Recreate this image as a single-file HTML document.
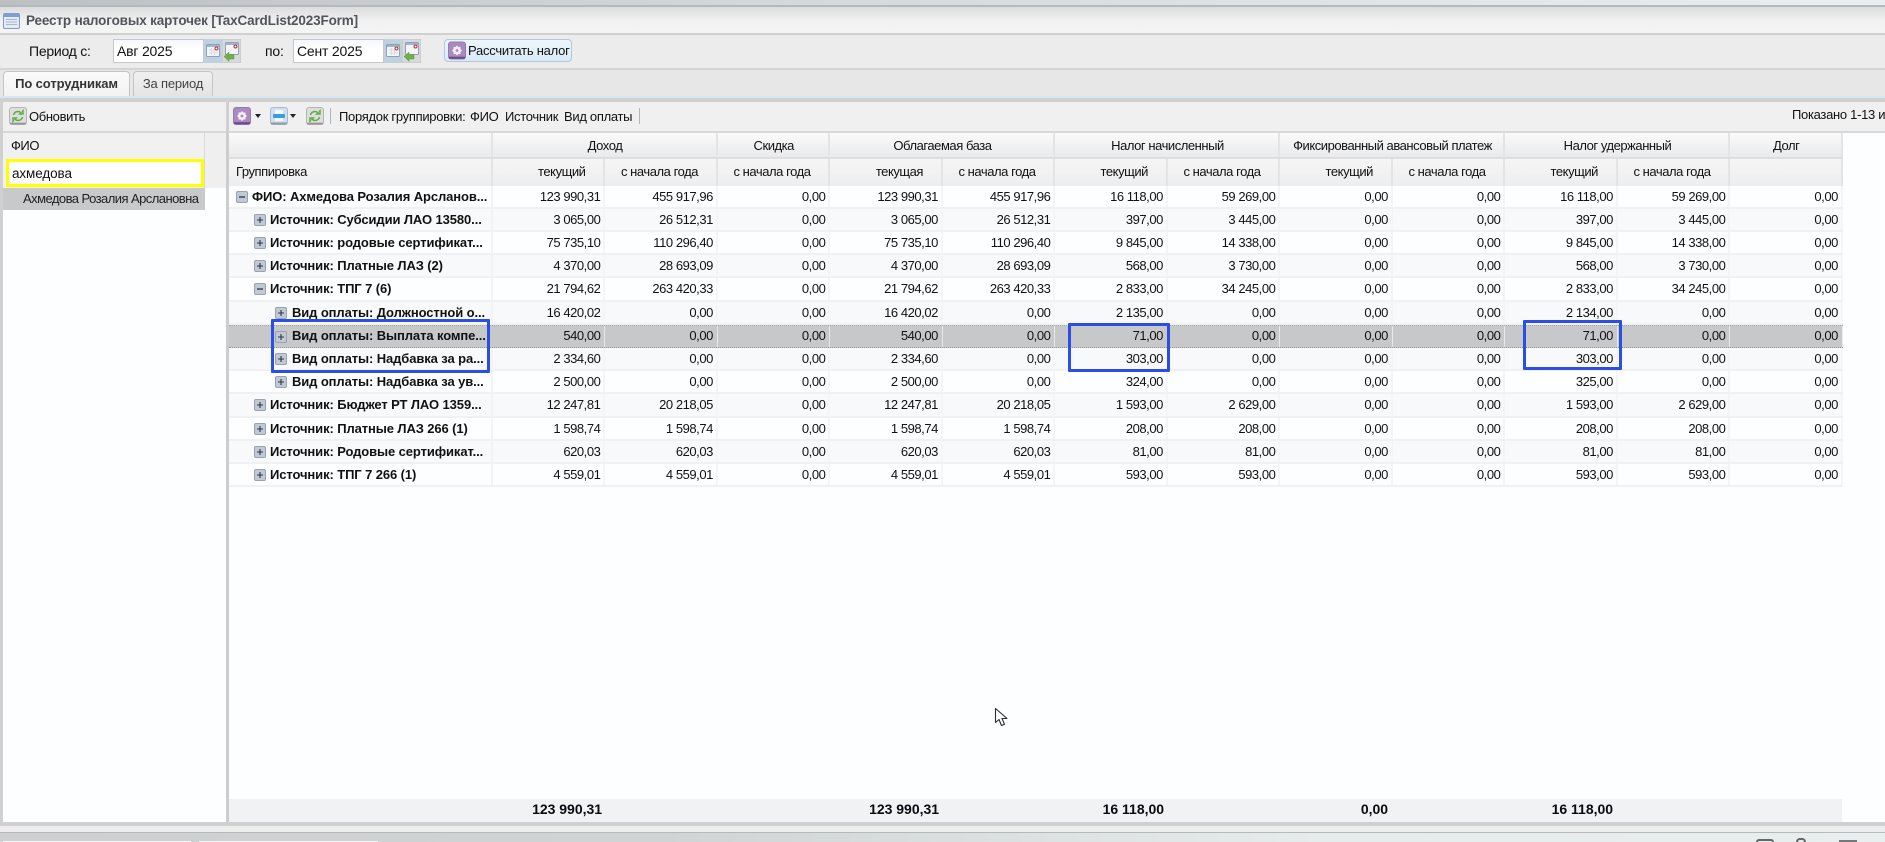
<!DOCTYPE html>
<html lang="ru"><head><meta charset="utf-8"><title>Реестр налоговых карточек</title>
<style>
*{box-sizing:border-box}
html,body{margin:0;padding:0;width:1885px;height:842px;overflow:hidden;background:#d0d0d0}
body{position:relative;font:13px/1 "Liberation Sans","Noto Sans CJK SC",sans-serif;color:#111;letter-spacing:-.45px}
.a{position:absolute;white-space:nowrap}
svg{position:absolute;display:block}
.rows{position:absolute;left:229px;top:185.5px;width:1613.500px}
.r{display:flex;height:23.23px;line-height:21px;background:#fdfeff;border-bottom:2px solid #f0f1f2}
.r.e{background:#f8f9fa}
.r.s{background:#c7c8ca;border-bottom:1px dotted #999;border-top:1px dotted #aaa;line-height:20px}
.r .n{width:263.500px;flex:none;position:relative;font-weight:bold;white-space:nowrap;overflow:hidden;border-right:2px solid #f2f3f5;letter-spacing:-.1px}
.r.s .n,.r.s span{border-right-color:#c7c8ca}
.r span{width:112.5px;flex:none;text-align:right;padding-right:2.6px;border-right:2px solid #f4f5f7}
.r.s span{border-right:1px solid #e8e8ea;padding-right:3.6px}
.l0{padding-left:23px}.l1{padding-left:41px}.l2{padding-left:63px}
.n svg{top:5px}
.l0 svg{left:7px}.l1 svg{left:25px}.l2 svg{left:46px}
.hd{position:absolute;display:flex;left:229px;width:1613.500px}
.hd div{flex:none;border-right:2px solid #e4e4e5}
.h1{top:133px;height:26px;line-height:25px;text-align:center;background:linear-gradient(#fafafa,#f4f4f4 40%,#e9eaec);border-bottom:2px solid #dedede}
.h1 div{padding-left:2px}
.h2{top:159px;height:26.5px;line-height:25px;text-align:right;background:linear-gradient(#f5f5f5,#eeeef0)}
.h2 div{width:112.5px;padding-right:17.5px}
.box{position:absolute;border:3px solid #2b4fe3;border-radius:1px}
.f{position:absolute;top:799px;font-weight:bold;font-size:14px;line-height:20px;letter-spacing:-.02px;color:#0a0a12;white-space:nowrap;text-align:right}
</style></head><body>
<svg width="0" height="0" style="position:absolute"><defs>
<symbol id="plus" viewBox="0 0 12 12"><rect x=".5" y=".5" width="11" height="11" rx="1.5" fill="#c0c9d5" stroke="#98a2b1"/><path d="M3 6h6M6 3v6" stroke="#2d3644" stroke-width="1.1"/></symbol>
<symbol id="minus" viewBox="0 0 12 12"><rect x=".5" y=".5" width="11" height="11" rx="1.5" fill="#c0c9d5" stroke="#98a2b1"/><path d="M3 6h6" stroke="#2d3644" stroke-width="1.3"/></symbol>
<symbol id="cal" viewBox="0 0 18 24"><rect width="18" height="24" fill="#bfd0de"/><rect x="2.500" y="5.500" width="13" height="12" rx="1" fill="#f4f5f6" stroke="#8ba2bb"/><rect x="3" y="6" width="12" height="2" fill="#9fb6d2"/><circle cx="12.500" cy="9.500" r="1.500" fill="#fff" stroke="#c02a2a"/><path d="M5 11h5M5 14h9M7.500 9v7M10.500 11v5" stroke="#d8dce0"/></symbol>
<symbol id="calb" viewBox="0 0 19 24"><rect width="19" height="24" fill="#d8d9da" stroke="#c0c4c8"/><rect x="3.500" y="3.500" width="13" height="12" rx="1" fill="#f4f5f6" stroke="#8ba2bb"/><rect x="4" y="4" width="12" height="2" fill="#9fb6d2"/><circle cx="13.500" cy="7.500" r="1.500" fill="#fff" stroke="#c02a2a"/><path d="M2 17.500l5-4.500v2.500h5v4.500H7v2.500z" fill="#6fb04a" stroke="#5c9a3a" stroke-width=".5"/></symbol>
<symbol id="pur" viewBox="0 0 18 18"><rect x=".5" y=".5" width="17" height="17" rx="2.500" fill="#a98bc0" stroke="#957bad"/><rect x="1" y="15.200" width="16" height="2" fill="#6d4a88"/><path d="M9 4l1.500 1.500H12.500V7.500L14 9l-1.500 1.500v2h-2L9 14l-1.500-1.500h-2v-2L4 9l1.500-1.500v-2h2z" fill="#f3edf7"/><circle cx="9" cy="9" r="1.400" fill="#a98bc0"/></symbol>
<symbol id="blu" viewBox="0 0 18 18"><rect x=".5" y=".5" width="17" height="17" rx="2.500" fill="#cfe0ee" stroke="#a6bacb"/><rect x="1" y="15.500" width="16" height="2" fill="#8f9ba6"/><rect x="5" y="3" width="8" height="4" fill="#f5f8fa"/><rect x="3" y="7" width="12" height="4" rx="1" fill="#3a9de0"/><rect x="5" y="11" width="8" height="3" fill="#f5f8fa"/></symbol>
<symbol id="ref" viewBox="0 0 18 18"><rect x=".5" y=".5" width="17" height="17" rx="2.500" fill="#dedede" stroke="#b4b4b4"/><rect x="1" y="15.700" width="16" height="1.800" fill="#979797"/><path d="M4.500 8a4.500 4.500 0 0 1 7.500-2.200L10.800 7h3.200V3.800L13 4.800M13.500 10A4.500 4.500 0 0 1 6 12.200L7.200 11H4v3.200l1-1" fill="none" stroke="#5cb040" stroke-width="1.500"/></symbol>
</defs></svg>

<!-- top -->
<div class="a" style="left:0;top:0;width:1885px;height:5px;background:linear-gradient(90deg,#bcc0c0,#d4d8d8 40%,#e9efef)"></div>
<div class="a" style="left:0;top:5px;width:1885px;height:2px;background:#b4b8c0"></div>
<div class="a" style="left:0;top:7px;width:1885px;height:26px;background:linear-gradient(#dcdcdc,#f2f2f2 55%,#f4f4f4)"></div>
<svg style="left:3px;top:13px" width="17" height="16" viewBox="0 0 17 16"><rect x=".5" y=".5" width="16" height="15" rx="1.500" fill="#e4ebf5" stroke="#7f9ccc"/><rect x="1" y="1" width="15" height="3" fill="#7d9fd6"/><path d="M3 6.500h11M3 9h11M3 11.500h11" stroke="#a9b7cc"/></svg>
<div class="a" style="left:26px;top:13px;font-size:13.5px;font-weight:bold;color:#50555b;line-height:15px;letter-spacing:-.15px">Реестр налоговых карточек [TaxCardList2023Form]</div>
<div class="a" style="left:0;top:33px;width:1885px;height:2px;background:#d0d0d0"></div>

<!-- filter bar -->
<div class="a" style="left:0;top:35px;width:1885px;height:33px;background:#ececec"></div>
<div class="a" style="left:29px;top:44px;font-size:14px;line-height:15px;letter-spacing:-.25px">Период с:</div>
<div class="a" style="left:113px;top:39px;width:91px;height:24px;background:linear-gradient(#f4f7fb,#fff 40%);border:1px solid #c4c8cc;font-size:14px;line-height:22px;padding-left:3px;letter-spacing:-.2px">Авг 2025</div>
<svg style="left:204px;top:39px" width="18" height="24"><use href="#cal"/></svg>
<svg style="left:222px;top:39px" width="19" height="24"><use href="#calb"/></svg>
<div class="a" style="left:265px;top:44px;font-size:14px;line-height:15px;letter-spacing:-.2px">по:</div>
<div class="a" style="left:293px;top:39px;width:91px;height:24px;background:linear-gradient(#f4f7fb,#fff 40%);border:1px solid #c4c8cc;font-size:14px;line-height:22px;padding-left:3px;letter-spacing:-.2px">Сент 2025</div>
<svg style="left:384px;top:39px" width="18" height="24"><use href="#cal"/></svg>
<svg style="left:402px;top:39px" width="19" height="24"><use href="#calb"/></svg>
<div class="a" style="left:444px;top:39px;width:128px;height:23px;border:1px solid #b4c6d8;border-radius:4px;background:linear-gradient(#eef6fc,#d8eaf7);font-size:13px;line-height:22px;padding-left:23px;letter-spacing:-.25px;color:#111">Рассчитать налог</div>
<svg style="left:448px;top:41px" width="18" height="19"><use href="#pur"/></svg>
<div class="a" style="left:0;top:68px;width:1885px;height:2px;background:#d4d4d4"></div>

<!-- tabs -->
<div class="a" style="left:0;top:70px;width:1885px;height:26px;background:#e7e7e7"></div>
<div class="a" style="left:3px;top:71px;width:127px;height:26px;background:linear-gradient(#fafafa,#f2f2f2);border:1px solid #c4c4c4;border-bottom:0;border-radius:4px 4px 0 0;font-weight:bold;color:#333;line-height:24px;text-align:center;letter-spacing:-.1px">По сотрудникам</div>
<div class="a" style="left:133px;top:71px;width:80px;height:25px;background:linear-gradient(#f0f0f0,#e4e4e4);border:1px solid #c4c4c4;border-bottom:0;border-radius:4px 4px 0 0;color:#444;line-height:24px;text-align:center;letter-spacing:-.2px">За период</div>
<div class="a" style="left:0;top:96px;width:1885px;height:2px;background:#d8e8f2"></div>
<div class="a" style="left:0;top:98px;width:1885px;height:4px;background:#d0d0d0"></div>

<!-- left panel -->
<div class="a" style="left:3px;top:102px;width:223px;height:29px;background:#f0f0f0"></div>
<svg style="left:9px;top:107px" width="18" height="18"><use href="#ref"/></svg>
<div class="a" style="left:29px;top:109px;line-height:15px;letter-spacing:-.35px">Обновить</div>
<div class="a" style="left:3px;top:131px;width:223px;height:691px;background:#fdfeff"></div>
<div class="a" style="left:3px;top:131px;width:223px;height:2px;background:#d8d8d8"></div>
<div class="a" style="left:3px;top:133px;width:202px;height:56px;background:#f1f1f1;border-right:1px solid #d8d8d8"></div>
<div class="a" style="left:205px;top:133px;width:21px;height:55px;background:#efefef"></div>
<div class="a" style="left:11px;top:138px;line-height:15px">ФИО</div>
<div class="a" style="left:6px;top:159px;width:198px;height:28px;background:#fff;border:3px solid #ffff00;font-size:13.5px;line-height:24px;padding-left:3px;letter-spacing:-.1px">ахмедова</div>
<div class="a" style="left:3px;top:188px;width:202px;height:22px;background:#c8c9cb;line-height:21px;padding-left:20px;color:#222;letter-spacing:-.55px">Ахмедова Розалия Арслановна</div>

<!-- right -->
<div class="a" style="left:229px;top:102px;width:1656px;height:29px;background:#f0f0f0"></div>
<svg style="left:233px;top:107px" width="18" height="18"><use href="#pur"/></svg>
<svg style="left:255px;top:114px" width="6" height="4"><path d="M0 0h6L3 4z" fill="#222"/></svg>
<svg style="left:270px;top:107px" width="18" height="18"><use href="#blu"/></svg>
<svg style="left:290px;top:114px" width="6" height="4"><path d="M0 0h6L3 4z" fill="#222"/></svg>
<svg style="left:306px;top:107px" width="18" height="18"><use href="#ref"/></svg>
<div class="a" style="left:330px;top:108px;width:1px;height:16px;background:#b0b8b8"></div>
<div class="a" style="left:339px;top:109px;line-height:15px;letter-spacing:-.3px">Порядок группировки:</div>
<div class="a" style="left:470px;top:109px;line-height:15px;letter-spacing:-.3px">ФИО</div>
<div class="a" style="left:505px;top:109px;line-height:15px;letter-spacing:-.3px">Источник</div>
<div class="a" style="left:564px;top:109px;line-height:15px;letter-spacing:-.3px">Вид оплаты</div>
<div class="a" style="left:639px;top:108px;width:1px;height:16px;background:#b0b8b8"></div>
<div class="a" style="left:1792px;top:107px;line-height:15px;letter-spacing:-.3px">Показано 1-13 и</div>
<div class="a" style="left:229px;top:131px;width:1656px;height:2px;background:#d8d8d8"></div>
<div class="a" style="left:229px;top:133px;width:1656px;height:689px;background:#fdfeff"></div>

<div class="hd h1">
<div style="width:263.500px"></div><div style="width:225px">Доход</div><div style="width:112.500px">Скидка</div><div style="width:225px">Облагаемая база</div><div style="width:225px">Налог начисленный</div><div style="width:225px">Фиксированный авансовый платеж</div><div style="width:225px">Налог удержанный</div><div style="width:112.500px">Долг</div>
</div>
<div class="hd h2">
<div style="width:263.500px;text-align:left;padding-left:7px">Группировка</div><div>текущий</div><div>с начала года</div><div>с начала года</div><div>текущая</div><div>с начала года</div><div>текущий</div><div>с начала года</div><div>текущий</div><div>с начала года</div><div>текущий</div><div>с начала года</div><div></div>
</div>

<div class="rows">
<div class="r"><div class="n l0"><svg width="12" height="12"><use href="#minus"/></svg>ФИО: Ахмедова Розалия Арсланов...</div><span>123 990,31</span><span>455 917,96</span><span>0,00</span><span>123 990,31</span><span>455 917,96</span><span>16 118,00</span><span>59 269,00</span><span>0,00</span><span>0,00</span><span>16 118,00</span><span>59 269,00</span><span>0,00</span></div>
<div class="r e"><div class="n l1"><svg width="12" height="12"><use href="#plus"/></svg>Источник: Субсидии ЛАО 13580...</div><span>3 065,00</span><span>26 512,31</span><span>0,00</span><span>3 065,00</span><span>26 512,31</span><span>397,00</span><span>3 445,00</span><span>0,00</span><span>0,00</span><span>397,00</span><span>3 445,00</span><span>0,00</span></div>
<div class="r"><div class="n l1"><svg width="12" height="12"><use href="#plus"/></svg>Источник: родовые сертификат...</div><span>75 735,10</span><span>110 296,40</span><span>0,00</span><span>75 735,10</span><span>110 296,40</span><span>9 845,00</span><span>14 338,00</span><span>0,00</span><span>0,00</span><span>9 845,00</span><span>14 338,00</span><span>0,00</span></div>
<div class="r e"><div class="n l1"><svg width="12" height="12"><use href="#plus"/></svg>Источник: Платные ЛАЗ (2)</div><span>4 370,00</span><span>28 693,09</span><span>0,00</span><span>4 370,00</span><span>28 693,09</span><span>568,00</span><span>3 730,00</span><span>0,00</span><span>0,00</span><span>568,00</span><span>3 730,00</span><span>0,00</span></div>
<div class="r"><div class="n l1"><svg width="12" height="12"><use href="#minus"/></svg>Источник: ТПГ 7 (6)</div><span>21 794,62</span><span>263 420,33</span><span>0,00</span><span>21 794,62</span><span>263 420,33</span><span>2 833,00</span><span>34 245,00</span><span>0,00</span><span>0,00</span><span>2 833,00</span><span>34 245,00</span><span>0,00</span></div>
<div class="r e"><div class="n l2"><svg width="12" height="12"><use href="#plus"/></svg>Вид оплаты: Должностной о...</div><span>16 420,02</span><span>0,00</span><span>0,00</span><span>16 420,02</span><span>0,00</span><span>2 135,00</span><span>0,00</span><span>0,00</span><span>0,00</span><span>2 134,00</span><span>0,00</span><span>0,00</span></div>
<div class="r s"><div class="n l2"><svg width="12" height="12"><use href="#plus"/></svg>Вид оплаты: Выплата компе...</div><span>540,00</span><span>0,00</span><span>0,00</span><span>540,00</span><span>0,00</span><span>71,00</span><span>0,00</span><span>0,00</span><span>0,00</span><span>71,00</span><span>0,00</span><span>0,00</span></div>
<div class="r e"><div class="n l2"><svg width="12" height="12"><use href="#plus"/></svg>Вид оплаты: Надбавка за ра...</div><span>2 334,60</span><span>0,00</span><span>0,00</span><span>2 334,60</span><span>0,00</span><span>303,00</span><span>0,00</span><span>0,00</span><span>0,00</span><span>303,00</span><span>0,00</span><span>0,00</span></div>
<div class="r"><div class="n l2"><svg width="12" height="12"><use href="#plus"/></svg>Вид оплаты: Надбавка за ув...</div><span>2 500,00</span><span>0,00</span><span>0,00</span><span>2 500,00</span><span>0,00</span><span>324,00</span><span>0,00</span><span>0,00</span><span>0,00</span><span>325,00</span><span>0,00</span><span>0,00</span></div>
<div class="r e"><div class="n l1"><svg width="12" height="12"><use href="#plus"/></svg>Источник: Бюджет РТ ЛАО 1359...</div><span>12 247,81</span><span>20 218,05</span><span>0,00</span><span>12 247,81</span><span>20 218,05</span><span>1 593,00</span><span>2 629,00</span><span>0,00</span><span>0,00</span><span>1 593,00</span><span>2 629,00</span><span>0,00</span></div>
<div class="r"><div class="n l1"><svg width="12" height="12"><use href="#plus"/></svg>Источник: Платные ЛАЗ 266 (1)</div><span>1 598,74</span><span>1 598,74</span><span>0,00</span><span>1 598,74</span><span>1 598,74</span><span>208,00</span><span>208,00</span><span>0,00</span><span>0,00</span><span>208,00</span><span>208,00</span><span>0,00</span></div>
<div class="r e"><div class="n l1"><svg width="12" height="12"><use href="#plus"/></svg>Источник: Родовые сертификат...</div><span>620,03</span><span>620,03</span><span>0,00</span><span>620,03</span><span>620,03</span><span>81,00</span><span>81,00</span><span>0,00</span><span>0,00</span><span>81,00</span><span>81,00</span><span>0,00</span></div>
<div class="r"><div class="n l1"><svg width="12" height="12"><use href="#plus"/></svg>Источник: ТПГ 7 266 (1)</div><span>4 559,01</span><span>4 559,01</span><span>0,00</span><span>4 559,01</span><span>4 559,01</span><span>593,00</span><span>593,00</span><span>0,00</span><span>0,00</span><span>593,00</span><span>593,00</span><span>0,00</span></div>
</div>

<!-- blue annotation boxes -->
<div class="box" style="left:271px;top:319px;width:219px;height:54px"></div>
<div class="box" style="left:1068px;top:323px;width:102px;height:49px"></div>
<div class="box" style="left:1523px;top:320px;width:99px;height:50px"></div>

<!-- cursor -->
<svg style="left:994px;top:707px" width="15" height="21" viewBox="0 0 15 21"><path d="M1.500 1.500v14l3.500-3 2.500 6 3-1.200-2.500-5.800h5z" fill="#fff" stroke="#2a2a35" stroke-width="1.100" stroke-linejoin="round"/></svg>

<!-- footer -->
<div class="a" style="left:229px;top:799px;width:1613px;height:23px;background:#f1f2f3"></div>
<div class="f" style="right:1283px">123 990,31</div>
<div class="f" style="right:946px">123 990,31</div>
<div class="f" style="right:721px">16 118,00</div>
<div class="f" style="right:497px">0,00</div>
<div class="f" style="right:272px">16 118,00</div>

<!-- bottom -->
<div class="a" style="left:226px;top:133px;width:3px;height:689px;background:#cdcdcd"></div>
<div class="a" style="left:0;top:822px;width:1885px;height:4px;background:#d0d0d0"></div>
<div class="a" style="left:0;top:826px;width:1885px;height:6px;background:#ececec"></div>
<div class="a" style="left:0;top:832px;width:1885px;height:1px;background:#b8b8b8"></div>
<div class="a" style="left:0;top:833px;width:1885px;height:9px;background:linear-gradient(90deg,#ccd0d0,#d0d4d4 35%,#e6ebeb 70%,#e9eeee)"></div>
<div class="a" style="left:3px;top:841px;width:188px;height:1px;background:#f8f8f8"></div>
<div class="a" style="left:199px;top:841px;width:179px;height:1px;background:#f8f8f8"></div>
<div class="a" style="left:1756px;top:839px;width:18px;height:3px;border:2px solid #666;border-bottom:0;border-radius:9px 9px 0 0"></div>
<div class="a" style="left:1796px;top:838px;width:10px;height:4px;border:2px solid #666;border-bottom:0;border-radius:5px 5px 0 0"></div>
<div class="a" style="left:1839px;top:840px;width:18px;height:2px;background:#777"></div>
</body></html>
